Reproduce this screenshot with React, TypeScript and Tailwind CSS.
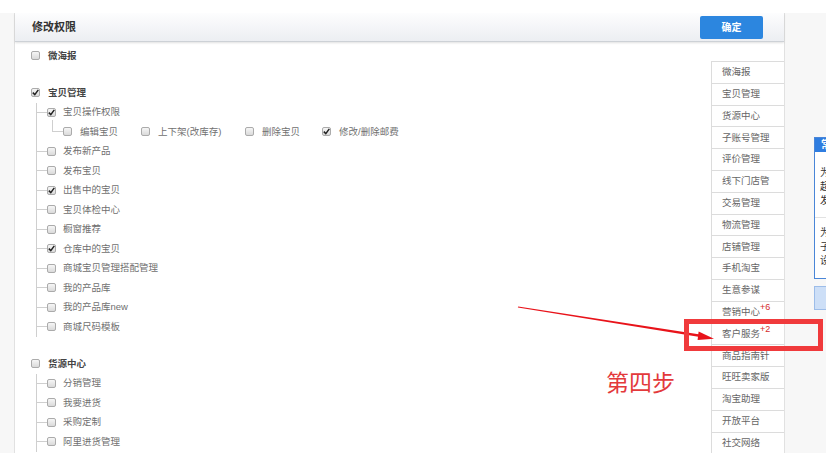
import React from "react";

type Sub = { l: string; w?: number; checked?: boolean };
type Child = { label: string; checked?: boolean; sub?: Sub[] };
type Group = { label: string; checked?: boolean; children?: Child[] };

const groups: Group[] = [
  { label: "微海报" },
  {
    label: "宝贝管理",
    checked: true,
    children: [
      {
        label: "宝贝操作权限",
        checked: true,
        sub: [
          { l: "编辑宝贝", w: 78 },
          { l: "上下架(改库存)", w: 104 },
          { l: "删除宝贝", w: 77 },
          { l: "修改/删除邮费", checked: true },
        ],
      },
      { label: "发布新产品" },
      { label: "发布宝贝" },
      { label: "出售中的宝贝", checked: true },
      { label: "宝贝体检中心" },
      { label: "橱窗推荐" },
      { label: "仓库中的宝贝", checked: true },
      { label: "商城宝贝管理搭配管理" },
      { label: "我的产品库" },
      { label: "我的产品库new" },
      { label: "商城尺码模板" },
    ],
  },
  {
    label: "货源中心",
    children: [
      { label: "分销管理" },
      { label: "我要进货" },
      { label: "采购定制" },
      { label: "阿里进货管理" },
    ],
  },
];

const nav: { t: string; sup?: string }[] = [
  { t: "微海报" },
  { t: "宝贝管理" },
  { t: "货源中心" },
  { t: "子账号管理" },
  { t: "评价管理" },
  { t: "线下门店管" },
  { t: "交易管理" },
  { t: "物流管理" },
  { t: "店铺管理" },
  { t: "手机淘宝" },
  { t: "生意参谋" },
  { t: "营销中心", sup: "+6" },
  { t: "客户服务", sup: "+2" },
  { t: "商品指南针" },
  { t: "旺旺卖家版" },
  { t: "淘宝助理" },
  { t: "开放平台" },
  { t: "社交网络" },
];

function Box({ checked }: { checked?: boolean }) {
  return (
    <span className="w-[9px] h-[9px] shrink-0 rounded-[2px] border border-[#ababab] bg-linear-to-b from-[#f6f6f6] to-[#dadada] flex items-center justify-center">
      {checked && (
        <svg width="7" height="7" viewBox="0 0 7 7">
          <path d="M0.8 3.6 L2.8 5.6 L6.3 0.9" stroke="#222" strokeWidth="1.5" fill="none" />
        </svg>
      )}
    </span>
  );
}

export default function App() {
  return (
    <div className="relative w-[826px] h-[470px] bg-white overflow-hidden font-['Liberation_Sans','Noto_Sans_CJK_SC',sans-serif]">
      <div className="mt-[13px] h-[440px] flex bg-[#f7f7f7] overflow-hidden">
        <div className="w-[14px] shrink-0" />
        {/* panel */}
        <div className="w-[771px] shrink-0 flex flex-col bg-white border-l border-r border-[#e1e1e1]">
          <div className="h-[29px] shrink-0 flex items-center justify-between pl-[17px] pr-[21px] bg-linear-to-b from-[#fdfdfe] to-[#eceef2] border-b border-[#cdd1d6] shadow-[0_1px_2px_rgba(0,0,0,0.12)]">
            <span className="text-[11px] font-bold text-[#333]">修改权限</span>
            <button className="w-[63px] h-[23px] bg-[#2c86df] rounded-[2px] text-white text-[10px] font-bold flex items-center justify-center">
              确定
            </button>
          </div>
          <div className="flex flex-1 min-h-0">
            {/* tree */}
            <div className="flex-1 pt-[4px] pl-[16px] flex flex-col gap-[17.5px]">
              {groups.map((g) => (
                <div key={g.label} className="flex flex-col">
                  <div className="h-[19.5px] flex items-center gap-[8px]">
                    <Box checked={g.checked} />
                    <span className="text-[9.5px] font-bold text-[#444]">{g.label}</span>
                  </div>
                  {g.children && (
                    <div className="ml-[5px] border-l border-[#cfcfcf] flex flex-col">
                      {g.children.map((c) => (
                        <React.Fragment key={c.label}>
                          <div className="h-[19.5px] flex items-center">
                            <span className="w-[10px] h-px bg-[#cfcfcf]" />
                            <Box checked={c.checked} />
                            <span className="ml-[7px] text-[9.5px] text-[#707070]">{c.label}</span>
                          </div>
                          {c.sub && (
                            <div className="h-[19.5px] flex items-center pl-[15px]">
                              <span className="w-[11px] h-[12px] self-start -mt-[2px] border-l border-b border-[#cfcfcf]" />
                              {c.sub.map((s) => (
                                <div
                                  key={s.l}
                                  className="flex items-center gap-[8px] shrink-0"
                                  style={s.w ? { width: s.w } : undefined}
                                >
                                  <Box checked={s.checked} />
                                  <span className="text-[9.5px] text-[#707070] whitespace-nowrap">{s.l}</span>
                                </div>
                              ))}
                            </div>
                          )}
                        </React.Fragment>
                      ))}
                    </div>
                  )}
                </div>
              ))}
            </div>
            {/* right nav */}
            <div className="w-[73px] shrink-0 pt-[19px]">
              <div className="border-t border-l border-[#dcdcdc]">
                {nav.map((n) => (
                  <div
                    key={n.t}
                    className="h-[21.8px] border-b border-[#dcdcdc] flex items-center pl-[10px] text-[9.5px] text-[#666] whitespace-nowrap"
                  >
                    {n.t}
                    {n.sup && (
                      <span className="relative -top-[4px] text-[9px] text-[#d42b2b]">{n.sup}</span>
                    )}
                  </div>
                ))}
              </div>
            </div>
          </div>
        </div>
        {/* right strip */}
        <div className="flex-1 pl-[29px] pt-[124px] overflow-hidden">
          <div className="w-[160px] h-[142px] border border-[#4a86d8] bg-white flex flex-col overflow-hidden">
            <div className="h-[14px] bg-[#2f7de0] text-white text-[10px] font-bold pl-[6px] leading-[14px] whitespace-nowrap">
              常见问题
            </div>
            <div className="pl-[5px] pt-[14px] text-[10px] leading-[14px] text-[#333] whitespace-nowrap">
              <div>为什么我无法设置</div>
              <div>超级权限的子账号</div>
              <div>发布宝贝权限？</div>
            </div>
            <div className="mt-[9px] border-t border-[#e2e2e2]" />
            <div className="pl-[5px] pt-[8px] text-[10px] leading-[14px] text-[#333] whitespace-nowrap">
              <div>为什么我设置了</div>
              <div>子账号权限后</div>
              <div>设置没有生效？</div>
            </div>
          </div>
          <div className="mt-[7px] w-[160px] h-[24px] bg-[#cddff7] border border-[#9dbde9]" />
        </div>
      </div>

      {/* annotations */}
      <svg className="absolute left-0 top-0 pointer-events-none" width="826" height="470" viewBox="0 0 826 470">
        <polygon points="518.1,306.6 700.2,334.4 699.8,337 517.9,307.4" fill="#e8131a" />
        <polygon points="714,338.8 697.6,340 698.6,331.4" fill="#e8131a" />
      </svg>
      <div className="absolute left-[684px] top-[319px] w-[139px] h-[32px] border-[5px] border-[#f03a3c]" />
      <div className="absolute left-[606px] top-[370px] text-[23px] leading-none text-[#e3393b] font-['Noto_Sans_CJK_SC',sans-serif]">
        第四步
      </div>
    </div>
  );
}
